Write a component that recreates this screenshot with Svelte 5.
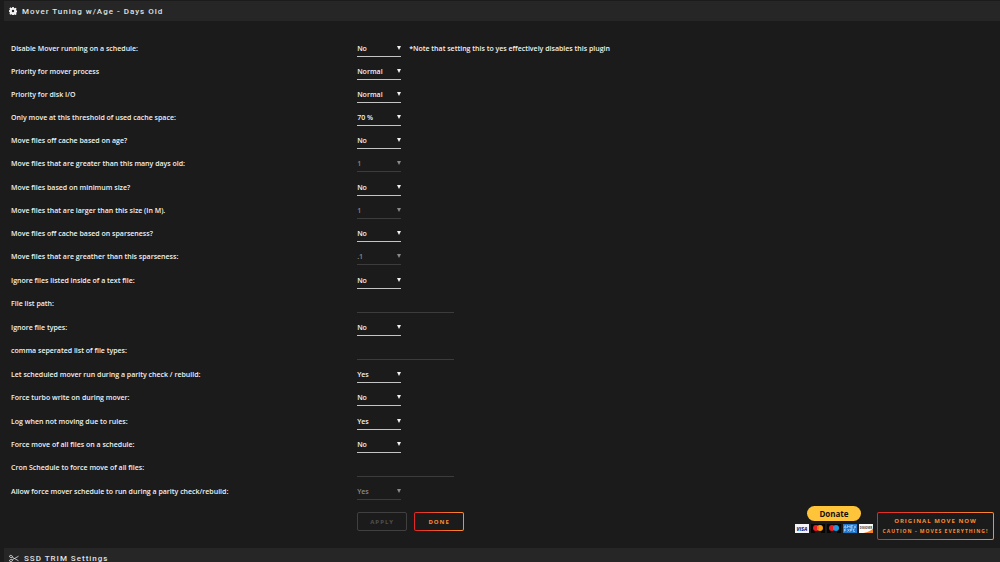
<script>
  const rows = [
    { id: 'disable', label: 'Disable Mover running on a schedule:', options: ['No', 'Yes'], note: '*Note that setting this to yes effectively disables this plugin' },
    { id: 'cpu', label: 'Priority for mover process', options: ['Normal', 'Low', 'Idle'] },
    { id: 'io', label: 'Priority for disk I/O', options: ['Normal', 'Low', 'Idle'] },
    { id: 'threshold', label: 'Only move at this threshold of used cache space:', options: ['70 %', '75 %', '80 %'] },
    { id: 'age', label: 'Move files off cache based on age?', options: ['No', 'Yes'] },
    { id: 'days', label: 'Move files that are greater than this many days old:', options: ['1', '2', '3'], disabled: true, tall: true },
    { id: 'size', label: 'Move files based on minimum size?', options: ['No', 'Yes'] },
    { id: 'megabytes', label: 'Move files that are larger than this size (In M).', options: ['1', '2', '3'], disabled: true },
    { id: 'sparse', label: 'Move files off cache based on sparseness?', options: ['No', 'Yes'] },
    { id: 'sparseness', label: 'Move files that are greather than this sparseness:', options: ['.1', '.2', '.3'], disabled: true, tall: true },
    { id: 'ignore', label: 'Ignore files listed inside of a text file:', options: ['No', 'Yes'] },
    { id: 'path', label: 'File list path:', text: true, tall: true },
    { id: 'types', label: 'Ignore file types:', options: ['No', 'Yes'] },
    { id: 'typelist', label: 'comma seperated list of file types:', text: true, tall: true },
    { id: 'parity', label: 'Let scheduled mover run during a parity check / rebuild:', options: ['Yes', 'No'] },
    { id: 'turbo', label: 'Force turbo write on during mover:', options: ['No', 'Yes'], tall: true },
    { id: 'log', label: 'Log when not moving due to rules:', options: ['Yes', 'No'] },
    { id: 'force', label: 'Force move of all files on a schedule:', options: ['No', 'Yes'] },
    { id: 'cron', label: 'Cron Schedule to force move of all files:', text: true, tall: true },
    { id: 'forceparity', label: 'Allow force mover schedule to run during a parity check/rebuild:', options: ['Yes', 'No'], disabled: true }
  ];
</script>

<main>
  <h2>
    <svg class="gear" viewBox="0 0 16 16" aria-hidden="true">
      <path fill-rule="evenodd" d="M6.500 0h3l.5 2.200 1.200.5 1.900-1.200 2.200 2.200-1.200 1.900.5 1.200 2.200.5v3l-2.200.5-.5 1.200 1.200 1.900-2.200 2.200-1.900-1.200-1.200.5-.5 2.200h-3L6 14.900l-1.200-.5-1.900 1.200L.7 13.400l1.200-1.900-.5-1.200L0 9.500v-3L1.400 6l.5-1.200L.7 2.900 2.900.7l1.900 1.200L6 1.800zM8 5.600a2.400 2.400 0 1 0 0 4.800a2.400 2.400 0 1 0 0-4.800z" />
    </svg>
    Mover Tuning w/Age - Days Old
  </h2>

  <form onsubmit={(e) => e.preventDefault()}>
    {#each rows as row (row.id)}
      <div class="row" class:tall={row.tall}>
        <label for={row.id}>{row.label}</label>
        <div class="field">
          {#if row.text}
            <input id={row.id} type="text" disabled />
          {:else}
            <span class="select" class:off={row.disabled}>
              <select id={row.id} disabled={row.disabled}>
                {#each row.options as option}
                  <option>{option}</option>
                {/each}
              </select>
            </span>
          {/if}
          {#if row.note}<span class="note">{row.note}</span>{/if}
        </div>
      </div>
    {/each}

    <div class="row actions">
      <div class="main-buttons">
        <button type="submit" disabled>APPLY</button>
        <button type="button">DONE</button>
      </div>
      <div class="side">
        <div class="paypal">
          <button type="button" class="donate">Donate</button>
          <div class="cards">
            <svg viewBox="0 0 28 18" role="img" aria-label="Visa">
              <rect width="28" height="18" fill="#f4f4f8" />
              <text x="14" y="13" text-anchor="middle" font-family="Open Sans, sans-serif" font-size="10" font-weight="800" font-style="italic" fill="#24397f">VISA</text>
            </svg>
            <svg viewBox="0 0 28 18" role="img" aria-label="Mastercard">
              <rect width="28" height="18" fill="#060606" />
              <circle cx="10" cy="8" r="6" fill="#e81e25" /><circle cx="18" cy="8" r="6" fill="#f79e1b" />
              <path d="M14 3.500a6 6 0 0 1 0 9a6 6 0 0 1 0-9z" fill="#ff6a10" />
              <path d="M8 16h12" stroke="#555" />
            </svg>
            <svg viewBox="0 0 28 18" role="img" aria-label="Maestro">
              <rect width="28" height="18" fill="#060606" />
              <circle cx="10" cy="8" r="6" fill="#e81e25" /><circle cx="18" cy="8" r="6" fill="#119fe0" />
              <path d="M14 3.500a6 6 0 0 1 0 9a6 6 0 0 1 0-9z" fill="#7673c0" />
              <path d="M8 16h12" stroke="#555" />
            </svg>
            <svg viewBox="0 0 28 18" role="img" aria-label="American Express">
              <rect width="28" height="18" fill="#2478ca" />
              <path d="M2 8l2.500-5L7 8M3 6.500h3M9 8V3l2.500 3L14 3v5M20 3h-4v5h4M16 5.500h3M22 3l4 5M26 3l-4 5M3 15v-5h3M3 12.500h3M9 10l4 5M13 10l-4 5M15 15v-5h3v2.500h-3M24 10h-3v5h3" fill="none" stroke="#cfe6fa" stroke-width="1.200" />
            </svg>
            <svg viewBox="0 0 28 18" role="img" aria-label="Discover">
              <rect width="28" height="18" fill="#fafafa" />
              <path d="M28 9v9H9c9-2 15-5 19-9z" fill="#f58220" />
              <text x="14" y="9" text-anchor="middle" font-family="Open Sans, sans-serif" font-size="5" font-weight="700" fill="#333">DISCOVER</text>
              <circle cx="12.500" cy="7.300" r="1.800" fill="#f58220" />
            </svg>
          </div>
        </div>
        <button type="button" class="move">
          ORIGINAL MOVE NOW
          <small>CAUTION - MOVES EVERYTHING!</small>
        </button>
      </div>
    </div>
  </form>

  <h2>
    <svg class="scissors" viewBox="0 0 20 16" aria-hidden="true">
      <g fill="none" stroke="currentColor" stroke-width="1.600">
        <ellipse cx="4" cy="4" rx="3" ry="2.200" transform="rotate(20 4 4)" />
        <ellipse cx="4" cy="12" rx="3" ry="2.200" transform="rotate(-20 4 12)" />
        <path d="M6.500 5.500L19 12.500M6.500 10.500L19 3.500" />
      </g>
    </svg>
    SSD TRIM Settings
  </h2>
</main>

<style>
  :global(body) {
    margin: 0;
    background: #1b1b1b;
  }

  main {
    padding: 1px 0 0 4px;
    color: #f2f2f2;
    font-family: "Open Sans", sans-serif;
    font-size: 7px;
    font-weight: 600;
  }

  h2 {
    display: flex;
    align-items: center;
    gap: 5px;
    height: 20px;
    margin: 0;
    padding: 0 5px;
    background: #262626;
    color: #e2e2e2;
    font-family: Roboto, sans-serif;
    font-size: 8px;
    font-weight: 500;
    letter-spacing: 1px;
  }

  .gear {
    width: 8px;
    height: 8px;
    fill: #f2f2f2;
  }

  .scissors {
    width: 10px;
    height: 9px;
  }

  form {
    padding: 16px 0 8px 7px;
  }

  .row {
    display: grid;
    grid-template-columns: 35% 1fr;
    height: 23px;
    line-height: 23px;
  }

  .row.tall {
    height: 24px;
  }

  .field {
    display: flex;
    align-items: flex-start;
    gap: 8px;
  }

  .select {
    position: relative;
    width: 44px;
    height: 20px;
    border-bottom: 1px solid #c4c4c4;
    box-sizing: border-box;
  }

  .select::after {
    content: "";
    position: absolute;
    right: 0;
    top: 9px;
    border: 2px solid transparent;
    border-top: 4px solid #f2f2f2;
    border-bottom: 0;
    pointer-events: none;
  }

  .select.off {
    border-color: #3c3c3c;
  }

  .select.off::after {
    border-top-color: #8a8a8a;
  }

  select,
  input {
    display: block;
    box-sizing: border-box;
    margin: 0;
    padding: 0;
    border: 0;
    border-radius: 0;
    background: transparent;
    color: #f2f2f2;
    font: inherit;
    outline: 0;
  }

  select {
    width: 100%;
    height: 23px;
    appearance: none;
  }

  select:disabled {
    color: #8a8a8a;
    opacity: 1;
  }

  input {
    width: 97px;
    height: 21px;
    border-bottom: 1px solid #3c3c3c;
  }

  .row.actions {
    display: flex;
    justify-content: space-between;
    align-items: flex-start;
    height: auto;
    padding: 3px 6px 0 35%;
    line-height: 10px;
  }

  .main-buttons {
    display: flex;
    gap: 7px;
    padding-top: 6px;
  }

  button {
    box-sizing: border-box;
    min-width: 50px;
    height: 19px;
    padding: 0;
    border: 1px solid transparent;
    border-radius: 2px;
    background:
      linear-gradient(#1b1b1b, #1b1b1b) padding-box,
      linear-gradient(90deg, #e22828, #ff8c2f) border-box;
    color: #ff8c2f;
    font: inherit;
    font-size: 6px;
    font-weight: 700;
    letter-spacing: 1px;
    white-space: nowrap;
  }

  button:disabled {
    background: transparent;
    border-color: #404040;
    color: #505050;
  }

  .side {
    display: flex;
    align-items: flex-start;
    gap: 4px;
  }

  .paypal {
    display: flex;
    flex-direction: column;
    align-items: center;
    gap: 3px;
  }

  .donate {
    width: 54px;
    height: 15px;
    border: 0;
    border-radius: 8px;
    background: #ffc439;
    color: #111;
    font-size: 8px;
    letter-spacing: 0;
    line-height: 15px;
  }

  .cards {
    display: flex;
    gap: 2px;
  }

  .cards svg {
    width: 14px;
    height: 9px;
  }

  .move {
    width: 117px;
    height: 28px;
    margin-top: 6px;
    line-height: 10px;
  }

  .move small {
    display: block;
    font-size: 5px;
  }
</style>
